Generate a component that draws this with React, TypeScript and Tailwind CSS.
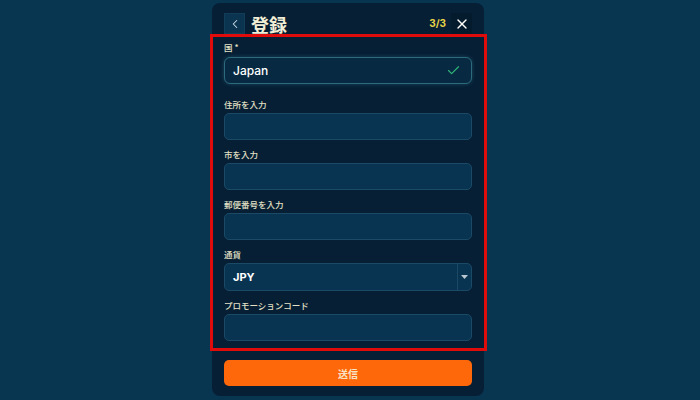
import { Check, ChevronLeft, X } from 'lucide-react';

const jp = { fontFamily: '"Noto Sans CJK JP", "Noto Sans", sans-serif' };
const latin = { fontFamily: 'Inter, "Noto Sans CJK JP", sans-serif' };

function Label({ children }: { children: React.ReactNode }) {
  return (
    <div
      className="h-[14px] text-[8.5px] leading-[14px] font-medium text-[#e4e1c6]"
      style={jp}
    >
      {children}
    </div>
  );
}

function Field({ label }: { label: string }) {
  return (
    <div className="mt-[7px]">
      <Label>{label}</Label>
      <div className="mt-[2px] h-[27px] rounded-[5px] border border-[#1a4a66] bg-[#093451]" />
    </div>
  );
}

export default function App() {
  return (
    <div className="min-h-screen w-full bg-[#083651] flex items-start">
      <div className="ml-[212px] mt-[3px] w-[272px] rounded-[8px] bg-[#061f35] px-3 pt-[10px] pb-[10px]">
        {/* header */}
        <div className="flex h-[21px] items-center">
          <button className="flex h-[21px] w-[21px] items-center justify-center border border-[#123d58] bg-[#0b3450] text-[#cfe0ea]">
            <ChevronLeft size={14} strokeWidth={1.8} />
          </button>
          <h1
            className="ml-[6px] text-[18px] font-bold leading-none text-[#f1eed6]"
            style={jp}
          >
            登録
          </h1>
          <span
            className="ml-auto text-[10px] font-bold text-[#e8d546]"
            style={latin}
          >
            3/3
          </span>
          <button className="ml-[5px] flex h-[21px] w-[21px] items-center justify-center bg-[#041a2d] text-white">
            <X size={16} strokeWidth={2} />
          </button>
        </div>

        {/* form */}
        <div className="relative pt-[6px] pb-[10px]">
          <div className="pointer-events-none absolute -left-[14px] -right-[15px] top-0 bottom-0 border-[3px] border-[#e00b0b]" />

          <div>
            <Label>国 *</Label>
            <div className="mt-[3px] flex h-[27px] items-center rounded-[6px] border border-[#2c6a7d] bg-[#072a42] pl-[8px] pr-[10px] shadow-[0_0_4px_rgba(60,140,160,0.35)]">
              <span className="text-[12px] font-medium text-white" style={latin}>
                Japan
              </span>
              <Check size={15} strokeWidth={1.8} className="ml-auto text-[#2fb679]" />
            </div>
          </div>

          <div className="mt-[13px]">
            <Label>住所を入力</Label>
            <div className="mt-[2px] h-[27px] rounded-[5px] border border-[#1a4a66] bg-[#093451]" />
          </div>
          <Field label="市を入力" />
          <Field label="郵便番号を入力" />

          <div className="mt-[7px]">
            <Label>通貨</Label>
            <div className="mt-[2px] flex h-[28px] items-stretch rounded-[5px] border border-[#1a4a66] bg-[#093451]">
              <div className="flex flex-1 items-center pl-[8px]">
                <span className="text-[11px] font-bold text-white" style={latin}>
                  JPY
                </span>
              </div>
              <div className="flex w-[14px] items-center justify-center border-l border-[#1a4a66]">
                <svg width="7" height="4" viewBox="0 0 7 4">
                  <path d="M0 0 H7 L3.5 4 Z" fill="#b9c7d0" />
                </svg>
              </div>
            </div>
          </div>

          <Field label="プロモーションコード" />
        </div>

        <button
          className="mt-[9px] flex h-[26px] w-full items-center justify-center rounded-[5px] bg-[#ff680a] text-[10px] font-bold text-[#f8e3c6]"
          style={jp}
        >
          送信
        </button>
      </div>
    </div>
  );
}
